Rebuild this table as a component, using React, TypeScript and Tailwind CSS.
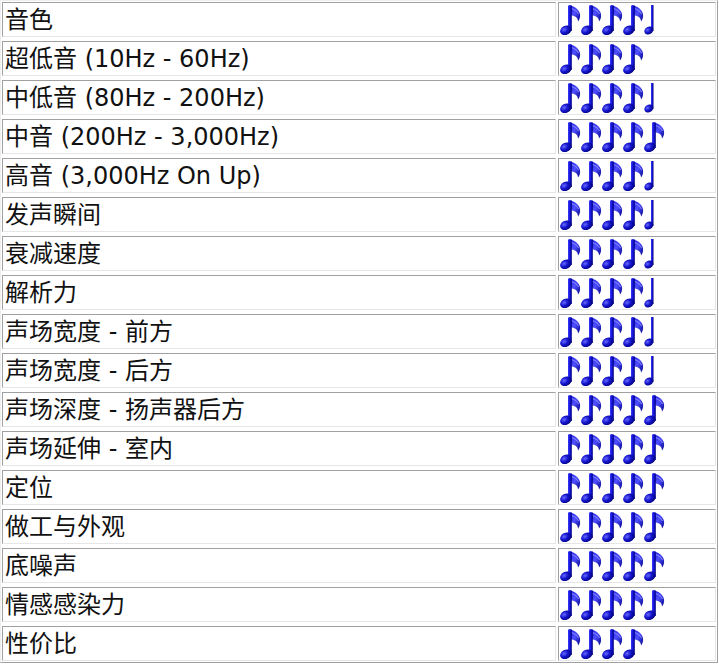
import React from "react"

const rows: [string, number][] = [
  ["音色", 4.5],
  ["超低音 (10Hz - 60Hz)", 4],
  ["中低音 (80Hz - 200Hz)", 4.5],
  ["中音 (200Hz - 3,000Hz)", 5],
  ["高音 (3,000Hz On Up)", 4.5],
  ["发声瞬间", 4.5],
  ["衰减速度", 4.5],
  ["解析力", 4.5],
  ["声场宽度 - 前方", 4.5],
  ["声场宽度 - 后方", 4.5],
  ["声场深度 - 扬声器后方", 5],
  ["声场延伸 - 室内", 5],
  ["定位", 5],
  ["做工与外观", 5],
  ["底噪声", 5],
  ["情感感染力", 5],
  ["性价比", 4],
]

function Defs() {
  return (
    <svg width="0" height="0" className="absolute">
      <defs>
        <linearGradient id="stemGrad" x1="0" y1="0" x2="1" y2="0">
          <stop offset="0" stopColor="#3a3aff" />
          <stop offset="0.5" stopColor="#1414d8" />
          <stop offset="1" stopColor="#00007a" />
        </linearGradient>
        <radialGradient id="headGrad" cx="0.4" cy="0.35" r="0.7">
          <stop offset="0" stopColor="#6a6aff" />
          <stop offset="0.45" stopColor="#1616d0" />
          <stop offset="1" stopColor="#000078" />
        </radialGradient>
        <linearGradient id="flagGrad" x1="0" y1="0" x2="1" y2="1">
          <stop offset="0" stopColor="#1a1ae0" />
          <stop offset="0.5" stopColor="#5050ff" />
          <stop offset="1" stopColor="#000088" />
        </linearGradient>
      </defs>
    </svg>
  )
}

function Note({ half }: { half?: boolean }) {
  if (half) {
    return (
      <svg width="11" height="31" viewBox="0 0 11 31" className="block">
        <rect x="7" y="1" width="2.5" height="26" fill="url(#stemGrad)" />
        <ellipse cx="4.8" cy="26.5" rx="4.6" ry="3.8" transform="rotate(-28 4.8 26.5)" fill="url(#headGrad)" />
      </svg>
    )
  }
  return (
    <svg width="21" height="31" viewBox="0 0 21 31" className="block">
      <path d="M9 1 C14 2 19 5 20 10 C20.5 13 19.5 15.5 18 17.5 C18 14 16 12 11.5 11.5 Z" fill="url(#flagGrad)" />
      <path d="M11.5 4.5 C14.5 5.5 17.5 7.5 18.5 10" stroke="#9090ff" strokeWidth="1" fill="none" />
      <rect x="8" y="1.5" width="3.8" height="25.5" fill="url(#stemGrad)" />
      <ellipse cx="5.8" cy="26.3" rx="5.9" ry="4.6" transform="rotate(-28 5.8 26.3)" fill="url(#headGrad)" />
    </svg>
  )
}

function Rating({ value }: { value: number }) {
  const full = Math.floor(value)
  const half = value - full > 0
  return (
    <div className="flex items-center h-full">
      {Array.from({ length: full }).map((_, i) => (
        <Note key={i} />
      ))}
      {half && <Note half />}
    </div>
  )
}

export default function App() {
  return (
    <div className="bg-white w-[719px] h-[665px] overflow-hidden" style={{ fontFamily: '"DejaVu Sans", "Noto Sans CJK SC", sans-serif' }}>
      <Defs />
      <div className="w-[718px] border border-t-[#eeeeee] border-l-[#eeeeee] border-r-[#a0a0a0] border-b-[#a0a0a0] p-[1px]">
        <div className="grid grid-cols-[554px_158px] gap-x-[2px] gap-y-[4px]">
          {rows.map(([label, value]) => (
            <React.Fragment key={label}>
              <div className="h-[35px] border border-t-[#a0a0a0] border-l-[#a0a0a0] border-r-[#e6e6e6] border-b-[#e6e6e6] pl-[2px] pt-[1px] flex items-center text-[24px] font-normal text-[#111] leading-none whitespace-nowrap">
                {label}
              </div>
              <div className="h-[35px] border border-t-[#a0a0a0] border-l-[#a0a0a0] border-r-[#e6e6e6] border-b-[#e6e6e6] pl-[1px] py-[1px]">
                <Rating value={value} />
              </div>
            </React.Fragment>
          ))}
        </div>
      </div>
    </div>
  )
}
